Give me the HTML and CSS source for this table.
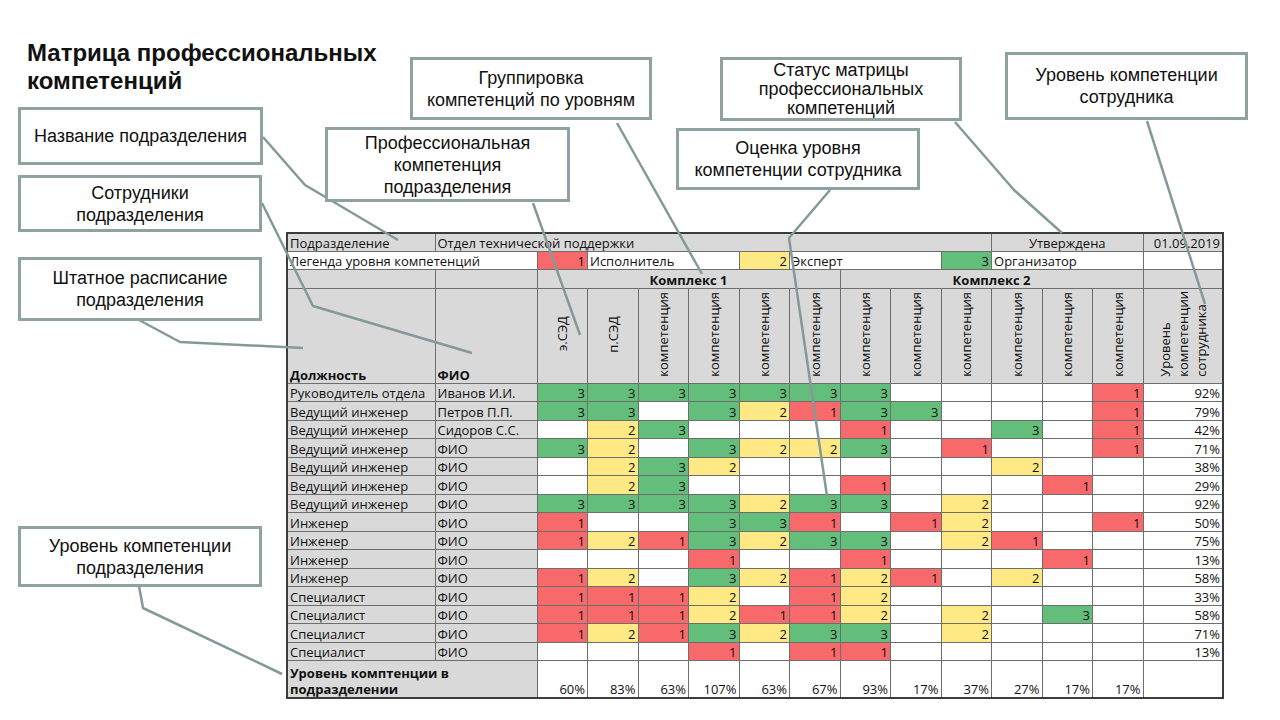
FILE: index.html
```html
<!DOCTYPE html>
<html lang="ru">
<head>
<meta charset="utf-8">
<title>Матрица профессиональных компетенций</title>
<link rel="stylesheet" href="styles.css">
</head>
<body>
<div class="page">
  <h1 class="title">Матрица профессиональных<br>компетенций</h1>

  <div class="sheet">
    <table class="matrix">
      <colgroup>
        <col class="c-pos"><col class="c-fio">
        <col class="c-k"><col class="c-k"><col class="c-k"><col class="c-k"><col class="c-k"><col class="c-k">
        <col class="c-k"><col class="c-k"><col class="c-k"><col class="c-k"><col class="c-k"><col class="c-k">
        <col class="c-tot">
      </colgroup>
      <tr class="r-info">
        <td class="gr">Подразделение</td>
        <td class="gr" colspan="10">Отдел технической поддержки</td>
        <td class="gr ctr" colspan="3">Утверждена</td>
        <td class="gr num">01.09.2019</td>
      </tr>
      <tr class="r-info">
        <td colspan="2">Легенда уровня компетенций</td>
        <td class="r num">1</td>
        <td colspan="3">Исполнитель</td>
        <td class="y num">2</td>
        <td colspan="3">Эксперт</td>
        <td class="g num">3</td>
        <td colspan="3">Организатор</td>
        <td></td>
      </tr>
      <tr class="r-group">
        <td class="gr"></td>
        <td class="gr"></td>
        <td class="gr ctr bold" colspan="6">Комплекс 1</td>
        <td class="gr ctr bold" colspan="6">Комплекс 2</td>
        <td class="gr"></td>
      </tr>
      <tr class="r-head">
        <td class="gr bottom bold">Должность</td>
        <td class="gr bottom bold">ФИО</td>
        <td class="gr rot-cell"><span class="rot">э.СЭД</span></td>
        <td class="gr rot-cell"><span class="rot">п.СЭД</span></td>
        <td class="gr rot-cell"><span class="rot">компетенция</span></td>
        <td class="gr rot-cell"><span class="rot">компетенция</span></td>
        <td class="gr rot-cell"><span class="rot">компетенция</span></td>
        <td class="gr rot-cell"><span class="rot">компетенция</span></td>
        <td class="gr rot-cell"><span class="rot">компетенция</span></td>
        <td class="gr rot-cell"><span class="rot">компетенция</span></td>
        <td class="gr rot-cell"><span class="rot">компетенция</span></td>
        <td class="gr rot-cell"><span class="rot">компетенция</span></td>
        <td class="gr rot-cell"><span class="rot">компетенция</span></td>
        <td class="gr rot-cell"><span class="rot">компетенция</span></td>
        <td class="gr rot-cell"><span class="rot rot-multi">Уровень<br>компетенции<br>сотрудника</span></td>
      </tr>
      <tr class="r-data">
        <td class="gr">Руководитель отдела</td><td class="gr">Иванов И.И.</td>
        <td class="g num">3</td><td class="g num">3</td><td class="g num">3</td><td class="g num">3</td><td class="g num">3</td><td class="g num">3</td>
        <td class="g num">3</td><td></td><td></td><td></td><td></td><td class="r num">1</td>
        <td class="num">92%</td>
      </tr>
      <tr class="r-data">
        <td class="gr">Ведущий инженер</td><td class="gr">Петров П.П.</td>
        <td class="g num">3</td><td class="g num">3</td><td></td><td class="g num">3</td><td class="y num">2</td><td class="r num">1</td>
        <td class="g num">3</td><td class="g num">3</td><td></td><td></td><td></td><td class="r num">1</td>
        <td class="num">79%</td>
      </tr>
      <tr class="r-data">
        <td class="gr">Ведущий инженер</td><td class="gr">Сидоров С.С.</td>
        <td></td><td class="y num">2</td><td class="g num">3</td><td></td><td></td><td></td>
        <td class="r num">1</td><td></td><td></td><td class="g num">3</td><td></td><td class="r num">1</td>
        <td class="num">42%</td>
      </tr>
      <tr class="r-data">
        <td class="gr">Ведущий инженер</td><td class="gr">ФИО</td>
        <td class="g num">3</td><td class="y num">2</td><td></td><td class="g num">3</td><td class="y num">2</td><td class="y num">2</td>
        <td class="g num">3</td><td></td><td class="r num">1</td><td></td><td></td><td class="r num">1</td>
        <td class="num">71%</td>
      </tr>
      <tr class="r-data">
        <td class="gr">Ведущий инженер</td><td class="gr">ФИО</td>
        <td></td><td class="y num">2</td><td class="g num">3</td><td class="y num">2</td><td></td><td></td>
        <td></td><td></td><td></td><td class="y num">2</td><td></td><td></td>
        <td class="num">38%</td>
      </tr>
      <tr class="r-data">
        <td class="gr">Ведущий инженер</td><td class="gr">ФИО</td>
        <td></td><td class="y num">2</td><td class="g num">3</td><td></td><td></td><td></td>
        <td class="r num">1</td><td></td><td></td><td></td><td class="r num">1</td><td></td>
        <td class="num">29%</td>
      </tr>
      <tr class="r-data">
        <td class="gr">Ведущий инженер</td><td class="gr">ФИО</td>
        <td class="g num">3</td><td class="g num">3</td><td class="g num">3</td><td class="g num">3</td><td class="y num">2</td><td class="g num">3</td>
        <td class="g num">3</td><td></td><td class="y num">2</td><td></td><td></td><td></td>
        <td class="num">92%</td>
      </tr>
      <tr class="r-data">
        <td class="gr">Инженер</td><td class="gr">ФИО</td>
        <td class="r num">1</td><td></td><td></td><td class="g num">3</td><td class="g num">3</td><td class="r num">1</td>
        <td></td><td class="r num">1</td><td class="y num">2</td><td></td><td></td><td class="r num">1</td>
        <td class="num">50%</td>
      </tr>
      <tr class="r-data">
        <td class="gr">Инженер</td><td class="gr">ФИО</td>
        <td class="r num">1</td><td class="y num">2</td><td class="r num">1</td><td class="g num">3</td><td class="y num">2</td><td class="g num">3</td>
        <td class="g num">3</td><td></td><td class="y num">2</td><td class="r num">1</td><td></td><td></td>
        <td class="num">75%</td>
      </tr>
      <tr class="r-data">
        <td class="gr">Инженер</td><td class="gr">ФИО</td>
        <td></td><td></td><td></td><td class="r num">1</td><td></td><td></td>
        <td class="r num">1</td><td></td><td></td><td></td><td class="r num">1</td><td></td>
        <td class="num">13%</td>
      </tr>
      <tr class="r-data">
        <td class="gr">Инженер</td><td class="gr">ФИО</td>
        <td class="r num">1</td><td class="y num">2</td><td></td><td class="g num">3</td><td class="y num">2</td><td class="r num">1</td>
        <td class="y num">2</td><td class="r num">1</td><td></td><td class="y num">2</td><td></td><td></td>
        <td class="num">58%</td>
      </tr>
      <tr class="r-data">
        <td class="gr">Специалист</td><td class="gr">ФИО</td>
        <td class="r num">1</td><td class="r num">1</td><td class="r num">1</td><td class="y num">2</td><td></td><td class="r num">1</td>
        <td class="y num">2</td><td></td><td></td><td></td><td></td><td></td>
        <td class="num">33%</td>
      </tr>
      <tr class="r-data">
        <td class="gr">Специалист</td><td class="gr">ФИО</td>
        <td class="r num">1</td><td class="r num">1</td><td class="r num">1</td><td class="y num">2</td><td class="r num">1</td><td class="r num">1</td>
        <td class="y num">2</td><td></td><td class="y num">2</td><td></td><td class="g num">3</td><td></td>
        <td class="num">58%</td>
      </tr>
      <tr class="r-data">
        <td class="gr">Специалист</td><td class="gr">ФИО</td>
        <td class="r num">1</td><td class="y num">2</td><td class="r num">1</td><td class="g num">3</td><td class="y num">2</td><td class="g num">3</td>
        <td class="g num">3</td><td></td><td class="y num">2</td><td></td><td></td><td></td>
        <td class="num">71%</td>
      </tr>
      <tr class="r-data">
        <td class="gr">Специалист</td><td class="gr">ФИО</td>
        <td></td><td></td><td></td><td class="r num">1</td><td></td><td class="r num">1</td>
        <td class="r num">1</td><td></td><td></td><td></td><td></td><td></td>
        <td class="num">13%</td>
      </tr>
      <tr class="r-sum">
        <td class="gr bold sum-label" colspan="2">Уровень комптенции в<br>подразделении</td>
        <td class="num bottom">60%</td><td class="num bottom">83%</td><td class="num bottom">63%</td><td class="num bottom">107%</td>
        <td class="num bottom">63%</td><td class="num bottom">67%</td><td class="num bottom">93%</td><td class="num bottom">17%</td>
        <td class="num bottom">37%</td><td class="num bottom">27%</td><td class="num bottom">17%</td><td class="num bottom">17%</td>
        <td></td>
      </tr>
    </table>
  </div>

  <svg class="leaders" width="1280" height="720" viewBox="0 0 1280 720" aria-hidden="true">
    <polyline points="263,137 305,185 398,240"/>
    <polyline points="262,203 313,306 472,353"/>
    <polyline points="139,320 180,342 303,348"/>
    <polyline points="139,586 143,608 282,674"/>
    <polyline points="533,203 580,335"/>
    <polyline points="617,123 702,274"/>
    <polyline points="830,190 789,238 827,496"/>
    <polyline points="955,122 1014,190 1062,233"/>
    <polyline points="1147,121 1205,304"/>
  </svg>

  <div class="callout co-dept">Название подразделения</div>
  <div class="callout co-staff">Сотрудники<br>подразделения</div>
  <div class="callout co-sched">Штатное расписание<br>подразделения</div>
  <div class="callout co-deptlevel">Уровень компетенции<br>подразделения</div>
  <div class="callout co-prof">Профессиональная<br>компетенция<br>подразделения</div>
  <div class="callout co-group">Группировка<br>компетенций по уровням</div>
  <div class="callout co-eval">Оценка уровня<br>компетенции сотрудника</div>
  <div class="callout co-status">Статус матрицы<br>профессиональных<br>компетенций</div>
  <div class="callout co-emp">Уровень компетенции<br>сотрудника</div>
</div>
</body>
</html>
```

FILE: styles.css
```css
* { box-sizing: border-box; }

html, body {
  margin: 0;
  padding: 0;
  background: #ffffff;
}

.page {
  position: relative;
  width: 1280px;
  height: 720px;
  overflow: hidden;
  background: #ffffff;
  font-family: "Liberation Sans", Arial, sans-serif;
  color: #111111;
}

.title {
  margin: 0;
  padding: 39px 0 0 27px;
  font: bold 24px/28px "Liberation Sans", Arial, sans-serif;
  color: #111111;
}

.sheet {
  margin: 137px 0 0 286px;
}

/* ---------- matrix table ---------- */
.matrix {
  border-collapse: collapse;
  table-layout: fixed;
  width: 936px;
  font-family: "Open Sans", "Noto Sans", sans-serif;
  font-size: 13px;
  color: #111111;
  border: 2px solid #3c3c3c;
}

.c-pos { width: 148px; }
.c-fio { width: 102px; }
.c-k { width: 50.5px; }
.c-tot { width: 80px; }

.matrix td {
  border: 1px solid #6e6e6e;
  padding: 0 2px;
  white-space: nowrap;
  overflow: hidden;
  line-height: 16px;
  vertical-align: bottom;
  background: #ffffff;
}

.r-info { height: 18px; }
.r-group { height: 19px; }
.r-head { height: 95px; }
.r-data { height: 18.5px; }
.r-sum { height: 37px; }

.matrix td.gr { background: #d9d9d9; }
.matrix td.g { background: #63be7b; }
.matrix td.y { background: #ffe984; }
.matrix td.r { background: #f8696b; }

.num { text-align: right; }
.ctr { text-align: center; }
.bold { font-weight: bold; }
.bottom { vertical-align: bottom; }

.rot-cell {
  text-align: center;
  vertical-align: middle !important;
  padding: 0 !important;
}

.rot {
  display: inline-block;
  writing-mode: vertical-rl;
  transform: rotate(180deg);
  line-height: 18px;
  text-align: center;
}

.rot-multi {
  text-align: left;
  line-height: 18px;
}

.sum-label {
  white-space: normal;
  line-height: 18px;
}

/* ---------- leader lines ---------- */
.leaders {
  position: absolute;
  left: 0;
  top: 0;
  pointer-events: none;
}

.leaders polyline {
  fill: none;
  stroke: #83999a;
  stroke-width: 2.5;
  stroke-linejoin: round;
}

/* ---------- callouts ---------- */
.callout {
  position: absolute;
  display: flex;
  align-items: center;
  justify-content: center;
  text-align: center;
  background: #ffffff;
  border: 3px solid #8ea3a1;
  font: 18px/22px "Liberation Sans", Arial, sans-serif;
  color: #111111;
}

.co-dept { left: 18px; top: 107px; width: 245px; height: 58px; }
.co-staff { left: 18px; top: 175px; width: 244px; height: 57px; }
.co-sched { left: 18px; top: 257px; width: 244px; height: 64px; }
.co-deptlevel { left: 18px; top: 526px; width: 244px; height: 61px; }
.co-prof { left: 325px; top: 127px; width: 245px; height: 75px; }
.co-group { left: 410px; top: 57px; width: 242px; height: 63px; }
.co-eval { left: 676px; top: 128px; width: 244px; height: 62px; }
.co-status { left: 720px; top: 57px; width: 242px; height: 64px; line-height: 19px; }
.co-emp { left: 1005px; top: 52px; width: 243px; height: 68px; }
```
